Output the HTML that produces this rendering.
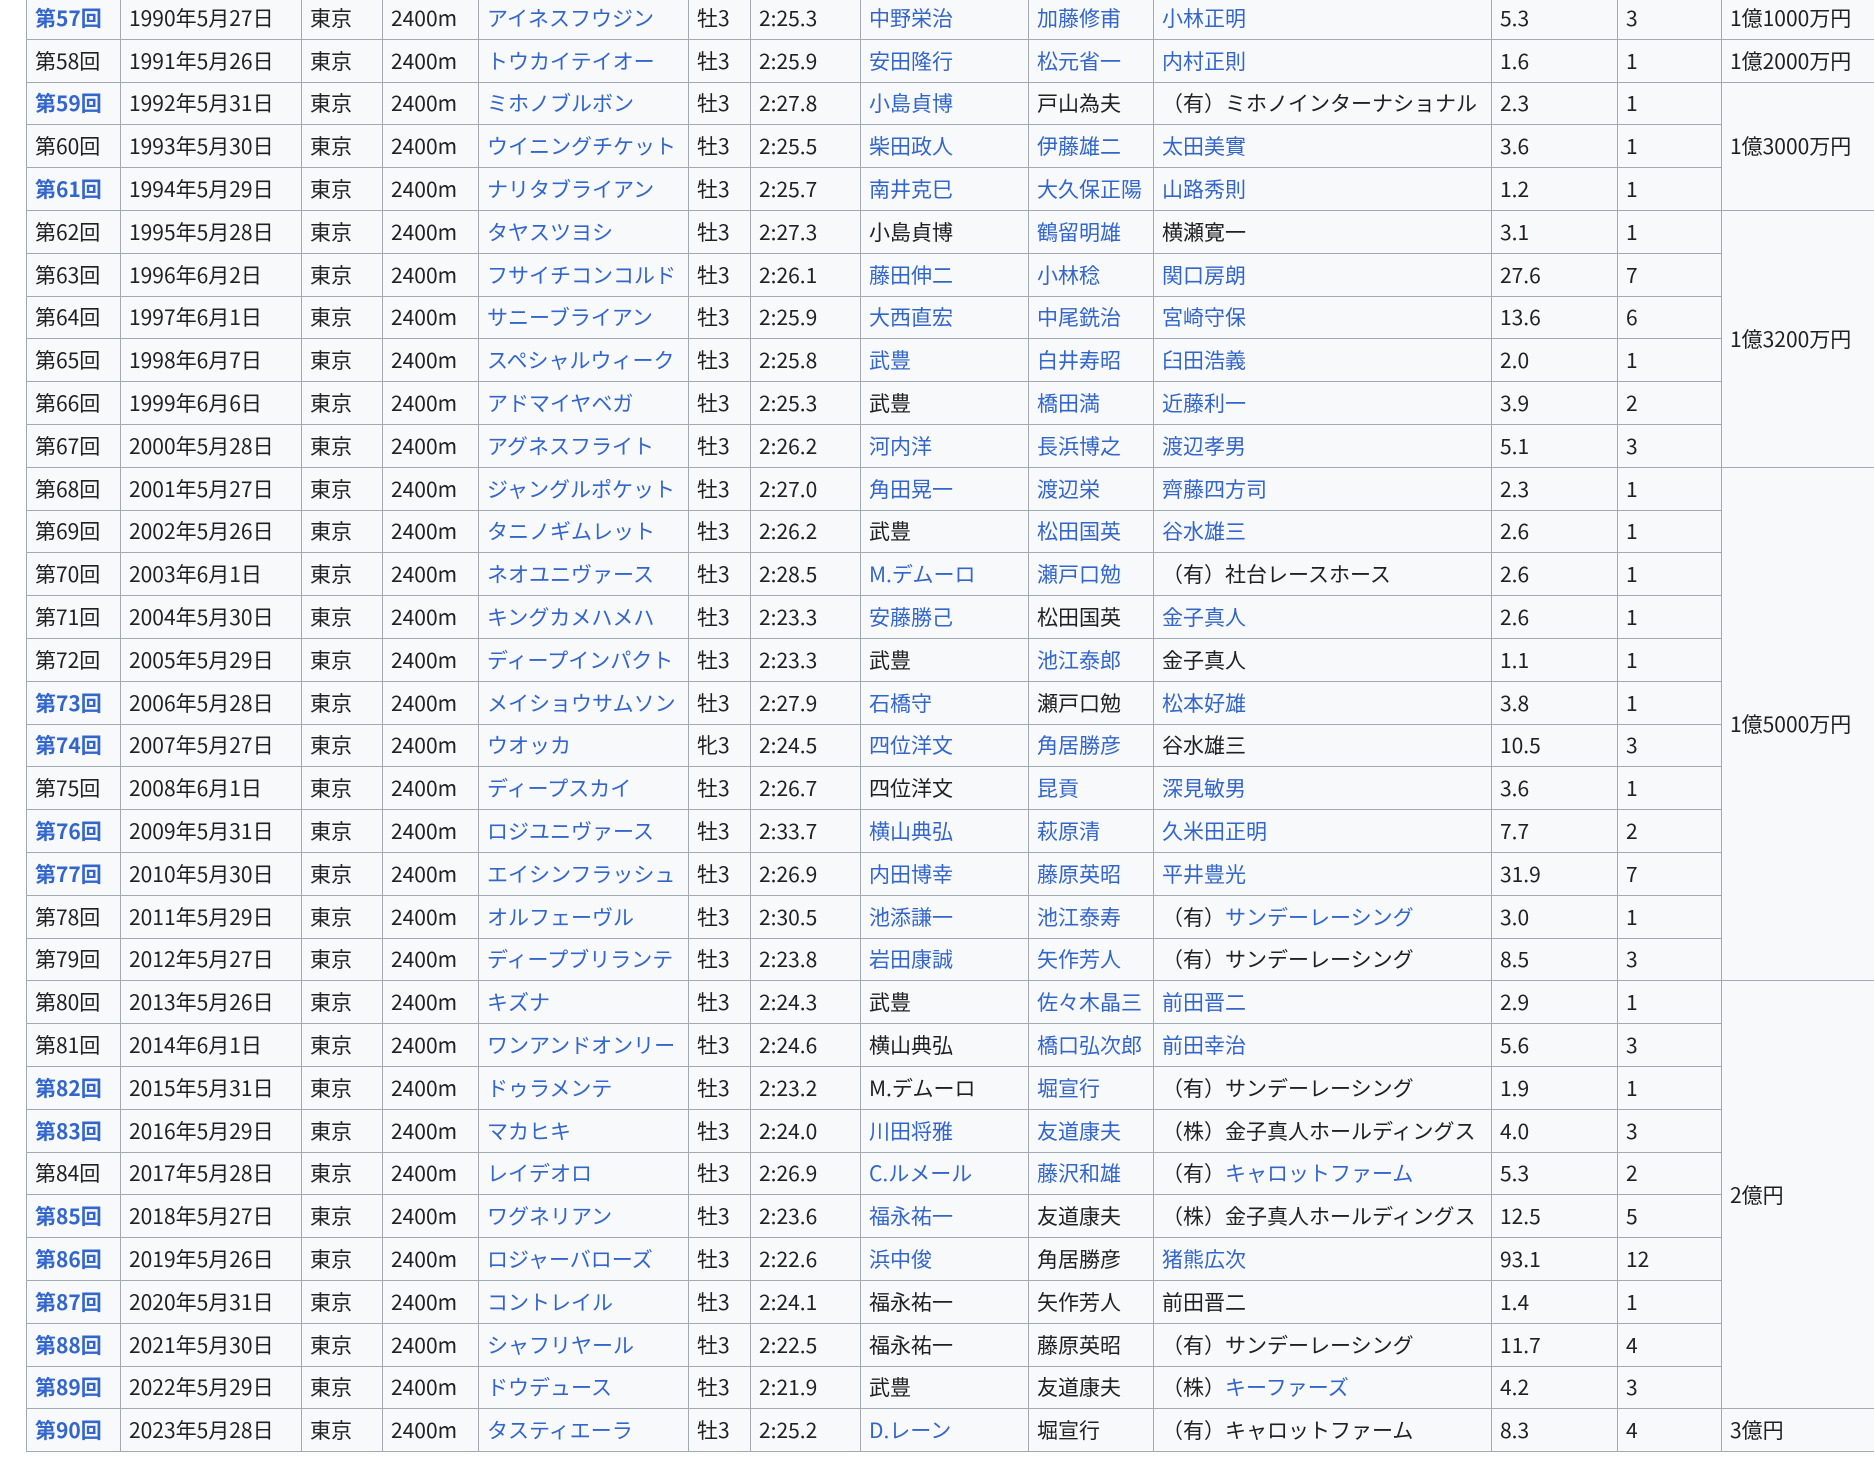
<!DOCTYPE html>
<html><head><meta charset="utf-8"><style>
html,body{margin:0;padding:0;background:#fff;width:1874px;height:1458px;overflow:hidden}
table{position:absolute;left:26px;top:-4px;border-collapse:collapse;table-layout:fixed;width:1900px;background:#f8f9fa;font-family:"Noto Sans CJK JP","Liberation Sans",sans-serif;font-size:21px;color:#202122}
td{border:1px solid #a2a9b1;padding:0 8px;height:41.8px;line-height:24px;white-space:nowrap;overflow:hidden;vertical-align:middle}
tr{height:42.8px}
.b{color:#3366cc}
.k{color:#3366cc;font-weight:bold}
</style></head><body>
<table>
<colgroup><col style="width:94px"><col style="width:181px"><col style="width:81px"><col style="width:96px"><col style="width:210px"><col style="width:62px"><col style="width:110px"><col style="width:168px"><col style="width:125px"><col style="width:338px"><col style="width:126px"><col style="width:104px"><col style="width:205px"></colgroup>
<tr><td class="k">第57回</td><td>1990年5月27日</td><td>東京</td><td>2400m</td><td class="b">アイネスフウジン</td><td>牡3</td><td>2:25.3</td><td class="b">中野栄治</td><td class="b">加藤修甫</td><td class="b">小林正明</td><td>5.3</td><td>3</td><td>1億1000万円</td></tr>
<tr><td>第58回</td><td>1991年5月26日</td><td>東京</td><td>2400m</td><td class="b">トウカイテイオー</td><td>牡3</td><td>2:25.9</td><td class="b">安田隆行</td><td class="b">松元省一</td><td class="b">内村正則</td><td>1.6</td><td>1</td><td>1億2000万円</td></tr>
<tr><td class="k">第59回</td><td>1992年5月31日</td><td>東京</td><td>2400m</td><td class="b">ミホノブルボン</td><td>牡3</td><td>2:27.8</td><td class="b">小島貞博</td><td>戸山為夫</td><td>（有）ミホノインターナショナル</td><td>2.3</td><td>1</td><td rowspan="3">1億3000万円</td></tr>
<tr><td>第60回</td><td>1993年5月30日</td><td>東京</td><td>2400m</td><td class="b">ウイニングチケット</td><td>牡3</td><td>2:25.5</td><td class="b">柴田政人</td><td class="b">伊藤雄二</td><td class="b">太田美實</td><td>3.6</td><td>1</td></tr>
<tr><td class="k">第61回</td><td>1994年5月29日</td><td>東京</td><td>2400m</td><td class="b">ナリタブライアン</td><td>牡3</td><td>2:25.7</td><td class="b">南井克巳</td><td class="b">大久保正陽</td><td class="b">山路秀則</td><td>1.2</td><td>1</td></tr>
<tr><td>第62回</td><td>1995年5月28日</td><td>東京</td><td>2400m</td><td class="b">タヤスツヨシ</td><td>牡3</td><td>2:27.3</td><td>小島貞博</td><td class="b">鶴留明雄</td><td>横瀬寛一</td><td>3.1</td><td>1</td><td rowspan="6">1億3200万円</td></tr>
<tr><td>第63回</td><td>1996年6月2日</td><td>東京</td><td>2400m</td><td class="b">フサイチコンコルド</td><td>牡3</td><td>2:26.1</td><td class="b">藤田伸二</td><td class="b">小林稔</td><td class="b">関口房朗</td><td>27.6</td><td>7</td></tr>
<tr><td>第64回</td><td>1997年6月1日</td><td>東京</td><td>2400m</td><td class="b">サニーブライアン</td><td>牡3</td><td>2:25.9</td><td class="b">大西直宏</td><td class="b">中尾銑治</td><td class="b">宮崎守保</td><td>13.6</td><td>6</td></tr>
<tr><td>第65回</td><td>1998年6月7日</td><td>東京</td><td>2400m</td><td class="b">スペシャルウィーク</td><td>牡3</td><td>2:25.8</td><td class="b">武豊</td><td class="b">白井寿昭</td><td class="b">臼田浩義</td><td>2.0</td><td>1</td></tr>
<tr><td>第66回</td><td>1999年6月6日</td><td>東京</td><td>2400m</td><td class="b">アドマイヤベガ</td><td>牡3</td><td>2:25.3</td><td>武豊</td><td class="b">橋田満</td><td class="b">近藤利一</td><td>3.9</td><td>2</td></tr>
<tr><td>第67回</td><td>2000年5月28日</td><td>東京</td><td>2400m</td><td class="b">アグネスフライト</td><td>牡3</td><td>2:26.2</td><td class="b">河内洋</td><td class="b">長浜博之</td><td class="b">渡辺孝男</td><td>5.1</td><td>3</td></tr>
<tr><td>第68回</td><td>2001年5月27日</td><td>東京</td><td>2400m</td><td class="b">ジャングルポケット</td><td>牡3</td><td>2:27.0</td><td class="b">角田晃一</td><td class="b">渡辺栄</td><td class="b">齊藤四方司</td><td>2.3</td><td>1</td><td rowspan="12">1億5000万円</td></tr>
<tr><td>第69回</td><td>2002年5月26日</td><td>東京</td><td>2400m</td><td class="b">タニノギムレット</td><td>牡3</td><td>2:26.2</td><td>武豊</td><td class="b">松田国英</td><td class="b">谷水雄三</td><td>2.6</td><td>1</td></tr>
<tr><td>第70回</td><td>2003年6月1日</td><td>東京</td><td>2400m</td><td class="b">ネオユニヴァース</td><td>牡3</td><td>2:28.5</td><td class="b">M.デムーロ</td><td class="b">瀬戸口勉</td><td>（有）社台レースホース</td><td>2.6</td><td>1</td></tr>
<tr><td>第71回</td><td>2004年5月30日</td><td>東京</td><td>2400m</td><td class="b">キングカメハメハ</td><td>牡3</td><td>2:23.3</td><td class="b">安藤勝己</td><td>松田国英</td><td class="b">金子真人</td><td>2.6</td><td>1</td></tr>
<tr><td>第72回</td><td>2005年5月29日</td><td>東京</td><td>2400m</td><td class="b">ディープインパクト</td><td>牡3</td><td>2:23.3</td><td>武豊</td><td class="b">池江泰郎</td><td>金子真人</td><td>1.1</td><td>1</td></tr>
<tr><td class="k">第73回</td><td>2006年5月28日</td><td>東京</td><td>2400m</td><td class="b">メイショウサムソン</td><td>牡3</td><td>2:27.9</td><td class="b">石橋守</td><td>瀬戸口勉</td><td class="b">松本好雄</td><td>3.8</td><td>1</td></tr>
<tr><td class="k">第74回</td><td>2007年5月27日</td><td>東京</td><td>2400m</td><td class="b">ウオッカ</td><td>牝3</td><td>2:24.5</td><td class="b">四位洋文</td><td class="b">角居勝彦</td><td>谷水雄三</td><td>10.5</td><td>3</td></tr>
<tr><td>第75回</td><td>2008年6月1日</td><td>東京</td><td>2400m</td><td class="b">ディープスカイ</td><td>牡3</td><td>2:26.7</td><td>四位洋文</td><td class="b">昆貢</td><td class="b">深見敏男</td><td>3.6</td><td>1</td></tr>
<tr><td class="k">第76回</td><td>2009年5月31日</td><td>東京</td><td>2400m</td><td class="b">ロジユニヴァース</td><td>牡3</td><td>2:33.7</td><td class="b">横山典弘</td><td class="b">萩原清</td><td class="b">久米田正明</td><td>7.7</td><td>2</td></tr>
<tr><td class="k">第77回</td><td>2010年5月30日</td><td>東京</td><td>2400m</td><td class="b">エイシンフラッシュ</td><td>牡3</td><td>2:26.9</td><td class="b">内田博幸</td><td class="b">藤原英昭</td><td class="b">平井豊光</td><td>31.9</td><td>7</td></tr>
<tr><td>第78回</td><td>2011年5月29日</td><td>東京</td><td>2400m</td><td class="b">オルフェーヴル</td><td>牡3</td><td>2:30.5</td><td class="b">池添謙一</td><td class="b">池江泰寿</td><td>（有）<span class="b">サンデーレーシング</span></td><td>3.0</td><td>1</td></tr>
<tr><td>第79回</td><td>2012年5月27日</td><td>東京</td><td>2400m</td><td class="b">ディープブリランテ</td><td>牡3</td><td>2:23.8</td><td class="b">岩田康誠</td><td class="b">矢作芳人</td><td>（有）サンデーレーシング</td><td>8.5</td><td>3</td></tr>
<tr><td>第80回</td><td>2013年5月26日</td><td>東京</td><td>2400m</td><td class="b">キズナ</td><td>牡3</td><td>2:24.3</td><td>武豊</td><td class="b">佐々木晶三</td><td class="b">前田晋二</td><td>2.9</td><td>1</td><td rowspan="10">2億円</td></tr>
<tr><td>第81回</td><td>2014年6月1日</td><td>東京</td><td>2400m</td><td class="b">ワンアンドオンリー</td><td>牡3</td><td>2:24.6</td><td>横山典弘</td><td class="b">橋口弘次郎</td><td class="b">前田幸治</td><td>5.6</td><td>3</td></tr>
<tr><td class="k">第82回</td><td>2015年5月31日</td><td>東京</td><td>2400m</td><td class="b">ドゥラメンテ</td><td>牡3</td><td>2:23.2</td><td>M.デムーロ</td><td class="b">堀宣行</td><td>（有）サンデーレーシング</td><td>1.9</td><td>1</td></tr>
<tr><td class="k">第83回</td><td>2016年5月29日</td><td>東京</td><td>2400m</td><td class="b">マカヒキ</td><td>牡3</td><td>2:24.0</td><td class="b">川田将雅</td><td class="b">友道康夫</td><td>（株）金子真人ホールディングス</td><td>4.0</td><td>3</td></tr>
<tr><td>第84回</td><td>2017年5月28日</td><td>東京</td><td>2400m</td><td class="b">レイデオロ</td><td>牡3</td><td>2:26.9</td><td class="b">C.ルメール</td><td class="b">藤沢和雄</td><td>（有）<span class="b">キャロットファーム</span></td><td>5.3</td><td>2</td></tr>
<tr><td class="k">第85回</td><td>2018年5月27日</td><td>東京</td><td>2400m</td><td class="b">ワグネリアン</td><td>牡3</td><td>2:23.6</td><td class="b">福永祐一</td><td>友道康夫</td><td>（株）金子真人ホールディングス</td><td>12.5</td><td>5</td></tr>
<tr><td class="k">第86回</td><td>2019年5月26日</td><td>東京</td><td>2400m</td><td class="b">ロジャーバローズ</td><td>牡3</td><td>2:22.6</td><td class="b">浜中俊</td><td>角居勝彦</td><td class="b">猪熊広次</td><td>93.1</td><td>12</td></tr>
<tr><td class="k">第87回</td><td>2020年5月31日</td><td>東京</td><td>2400m</td><td class="b">コントレイル</td><td>牡3</td><td>2:24.1</td><td>福永祐一</td><td>矢作芳人</td><td>前田晋二</td><td>1.4</td><td>1</td></tr>
<tr><td class="k">第88回</td><td>2021年5月30日</td><td>東京</td><td>2400m</td><td class="b">シャフリヤール</td><td>牡3</td><td>2:22.5</td><td>福永祐一</td><td>藤原英昭</td><td>（有）サンデーレーシング</td><td>11.7</td><td>4</td></tr>
<tr><td class="k">第89回</td><td>2022年5月29日</td><td>東京</td><td>2400m</td><td class="b">ドウデュース</td><td>牡3</td><td>2:21.9</td><td>武豊</td><td>友道康夫</td><td>（株）<span class="b">キーファーズ</span></td><td>4.2</td><td>3</td></tr>
<tr><td class="k">第90回</td><td>2023年5月28日</td><td>東京</td><td>2400m</td><td class="b">タスティエーラ</td><td>牡3</td><td>2:25.2</td><td class="b">D.レーン</td><td>堀宣行</td><td>（有）キャロットファーム</td><td>8.3</td><td>4</td><td>3億円</td></tr>
</table>
</body></html>
